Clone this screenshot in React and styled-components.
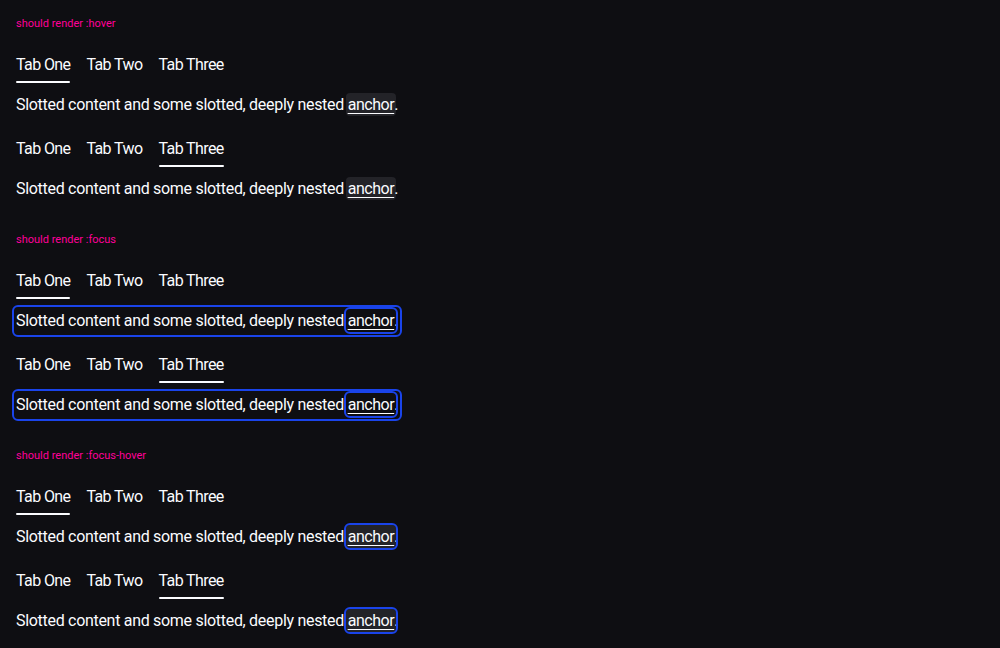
import React from "react";
import styled, { createGlobalStyle, css } from "styled-components";

const GlobalStyle = createGlobalStyle`
  html, body {
    margin: 0;
    padding: 0;
    background: #0e0e12;
  }
  body {
    font-family: Roboto, "Liberation Sans", sans-serif;
    color: #fbfcff;
  }
`;

const Page = styled.div`
  display: flex;
  flex-direction: column;
  padding: 16px 16px 0;
`;

const Section = styled.section`
  display: flex;
  flex-direction: column;
  height: 216px;
`;

const Label = styled.p`
  margin: 0;
  font-size: 11px;
  line-height: 16px;
  color: #ff0099;
`;

const Block = styled.div`
  display: flex;
  flex-direction: column;
  margin-top: ${(p) => p.$top}px;
`;

const TabBar = styled.div`
  display: flex;
  gap: 16px;
`;

const Tab = styled.span`
  position: relative;
  font-size: 16px;
  line-height: 24px;
  padding-bottom: 6px;
  letter-spacing: -0.6px;
  ${(p) =>
    p.$active &&
    css`
      &::after {
        content: "";
        position: absolute;
        left: 0;
        right: 0;
        bottom: 0;
        height: 2px;
        background: #fbfcff;
        border-radius: 1px;
      }
    `}
`;

const Content = styled.p`
  margin: 8px 0 0 -2px;
  padding: 2px;
  align-self: flex-start;
  font-size: 16px;
  line-height: 24px;
  letter-spacing: -0.3px;
  border-radius: 4px;
  ${(p) =>
    p.$focus &&
    css`
      outline: 2px solid #1a44ea;
      outline-offset: 0;
    `}
`;

const Anchor = styled.a`
  color: #fbfcff;
  text-decoration: underline;
  text-underline-offset: 3px;
  letter-spacing: -0.45px;
  border-radius: 4px;
  padding: 2px;
  margin: 0 -2px;
  ${(p) =>
    p.$hover &&
    css`
      background: #232328;
    `}
  ${(p) =>
    p.$focus &&
    css`
      outline: 2px solid #1a44ea;
      outline-offset: 0;
    `}
`;

const tabs = ["Tab One", "Tab Two", "Tab Three"];

const TabGroup = ({ active, top, hover, focusContent, focusAnchor }) => (
  <Block $top={top}>
    <TabBar>
      {tabs.map((t, i) => (
        <Tab key={t} $active={i === active}>
          {t}
        </Tab>
      ))}
    </TabBar>
    <Content $focus={focusContent}>
      Slotted content and some slotted, deeply nested{" "}
      <Anchor href="#" $hover={hover} $focus={focusAnchor}>
        anchor
      </Anchor>
      .
    </Content>
  </Block>
);

const states = [
  { name: ":hover", hover: true },
  { name: ":focus", focusContent: true, focusAnchor: true },
  { name: ":focus-hover", hover: true, focusAnchor: true },
];

export default function App() {
  return (
    <>
      <GlobalStyle />
      <Page>
        {states.map((s) => (
          <Section key={s.name}>
            <Label>should render {s.name}</Label>
            <TabGroup active={0} top={21} {...s} />
            <TabGroup active={2} top={18} {...s} />
          </Section>
        ))}
      </Page>
    </>
  );
}
